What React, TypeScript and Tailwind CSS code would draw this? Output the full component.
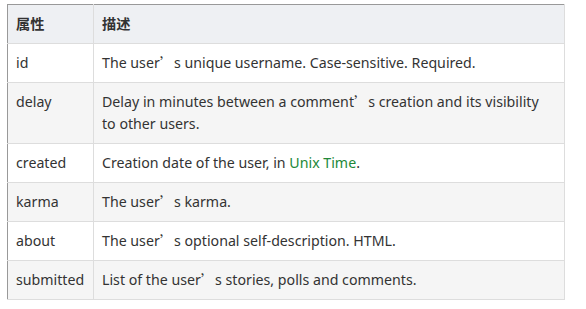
import React from 'react';

const rows: { name: string; desc: React.ReactNode }[] = [
  { name: 'id', desc: <>The user<Q />s unique username. Case-sensitive. Required.</> },
  { name: 'delay', desc: <>Delay in minutes between a comment<Q />s creation and its visibility to other users.</> },
  {
    name: 'created',
    desc: (
      <>
        Creation date of the user, in <a className="text-[#218838]">Unix Time</a>.
      </>
    ),
  },
  { name: 'karma', desc: <>The user<Q />s karma.</> },
  { name: 'about', desc: <>The user<Q />s optional self-description. HTML.</> },
  { name: 'submitted', desc: <>List of the user<Q />s stories, polls and comments.</> },
];

// full-width quote as rendered by the CJK font
function Q() {
  return <span className="inline-block leading-none font-['Noto_Sans_CJK_SC',sans-serif]">’</span>;
}

const App = () => {
  return (
    <div className="w-[586px] h-[309px] bg-white pt-[4px] pl-[7px] font-['Noto_Sans','Noto_Sans_CJK_SC',sans-serif] text-[14.2px] leading-[22px] text-[#333]">
      <table className="w-[558px] border-collapse">
        <thead>
          <tr className="bg-[#eef0f3]">
            <th className="w-[86px] h-[39px] border border-[#ddd] border-t-[#999] border-l-[#999] px-[8px] py-0 text-left font-bold">
              <span className="inline-block leading-none font-['Noto_Sans_CJK_SC',sans-serif]">属性</span>
            </th>
            <th className="h-[39px] border border-[#ddd] border-t-[#999] px-[8px] py-0 text-left font-bold">
              <span className="inline-block leading-none font-['Noto_Sans_CJK_SC',sans-serif]">描述</span>
            </th>
          </tr>
        </thead>
        <tbody>
          {rows.map((r, i) => (
            <tr key={r.name} className={i % 2 === 1 ? 'bg-[#f5f5f5]' : 'bg-white'}>
              <td className="border border-[#ddd] border-l-[#999] px-[8px] py-[8px] align-top">{r.name}</td>
              <td className="border border-[#ddd] pl-[8px] pr-[10px] py-[8px] align-top">{r.desc}</td>
            </tr>
          ))}
        </tbody>
      </table>
    </div>
  );
};

export default App;
